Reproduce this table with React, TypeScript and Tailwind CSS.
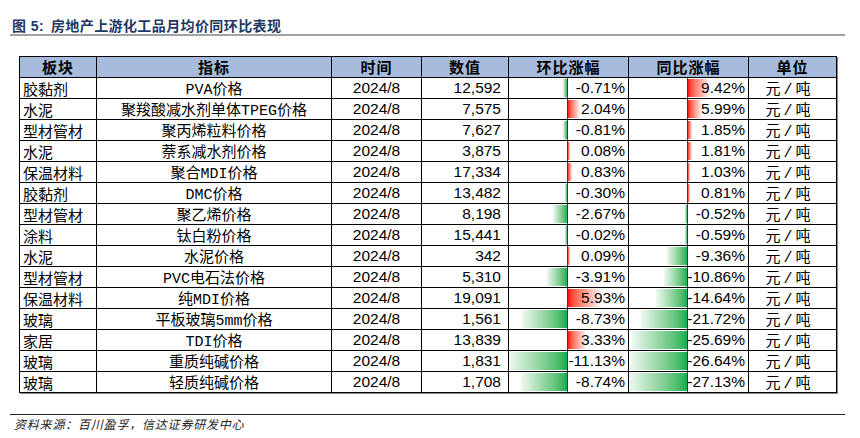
import React from "react";

type Row = {
  sector: string;
  item: string;
  value: string;
  mom: number;
  yoy: number;
};

const rows: Row[] = [
  { sector: "胶黏剂", item: "PVA价格", value: "12,592", mom: -0.71, yoy: 9.42 },
  { sector: "水泥", item: "聚羧酸减水剂单体TPEG价格", value: "7,575", mom: 2.04, yoy: 5.99 },
  { sector: "型材管材", item: "聚丙烯粒料价格", value: "7,627", mom: -0.81, yoy: 1.85 },
  { sector: "水泥", item: "萘系减水剂价格", value: "3,875", mom: 0.08, yoy: 1.81 },
  { sector: "保温材料", item: "聚合MDI价格", value: "17,334", mom: 0.83, yoy: 1.03 },
  { sector: "胶黏剂", item: "DMC价格", value: "13,482", mom: -0.3, yoy: 0.81 },
  { sector: "型材管材", item: "聚乙烯价格", value: "8,198", mom: -2.67, yoy: -0.52 },
  { sector: "涂料", item: "钛白粉价格", value: "15,441", mom: -0.02, yoy: -0.59 },
  { sector: "水泥", item: "水泥价格", value: "342", mom: 0.09, yoy: -9.36 },
  { sector: "型材管材", item: "PVC电石法价格", value: "5,310", mom: -3.91, yoy: -10.86 },
  { sector: "保温材料", item: "纯MDI价格", value: "19,091", mom: 5.93, yoy: -14.64 },
  { sector: "玻璃", item: "平板玻璃5mm价格", value: "1,561", mom: -8.73, yoy: -21.72 },
  { sector: "家居", item: "TDI价格", value: "13,839", mom: 3.33, yoy: -25.69 },
  { sector: "玻璃", item: "重质纯碱价格", value: "1,831", mom: -11.13, yoy: -26.64 },
  { sector: "玻璃", item: "轻质纯碱价格", value: "1,708", mom: -8.74, yoy: -27.13 },
];

const HALF = 58;

function DataBar({ v, max }: { v: number; max: number }) {
  const w = Math.max(2, Math.round((Math.abs(v) / max) * HALF));
  return (
    <div className="relative h-[20px] w-full">
      {v < 0 ? (
        <div
          className="absolute top-[1px] bottom-[1px] bg-linear-to-l from-[#00b050] to-[#eef9f2]"
          style={{ left: HALF - w, width: w }}
        />
      ) : (
        <div
          className="absolute top-[1px] bottom-[1px] bg-linear-to-r from-[#ff0000] to-[#ffe8e8]"
          style={{ left: HALF + 1, width: w }}
        />
      )}
      <div className="absolute top-0 bottom-0 left-[58px] w-px bg-[#3a3a3a]" />
      <div className="relative pr-[3px] text-right leading-[20px]">{v.toFixed(2)}%</div>
    </div>
  );
}

export default function App() {
  const cell = "border border-black p-0 h-[21px]";
  const head = "border border-black p-0 h-[21px] text-center font-bold tracking-[1px] text-[15px] leading-[20px]";
  const cjk = "[font-family:'Noto_Sans_CJK_SC',sans-serif]";
  const mono = "[font-family:'Liberation_Mono','Noto_Sans_CJK_SC',monospace]";
  const num = "[font-family:'Liberation_Sans',Arial,sans-serif] text-[15.5px]";

  return (
    <div className="w-[860px] h-[438px] bg-white overflow-hidden text-black">
      <div className="h-[34px] pt-[19px] pl-[12px] leading-[15px] text-[14px] font-bold text-[#1f3864] tracking-[0.4px] [font-family:'Liberation_Sans','Noto_Sans_CJK_SC',sans-serif]">
        <span className="mr-[7px]">图 5:</span>
        房地产上游化工品月均价同环比表现
      </div>
      <div className="ml-[10px] w-[835px] h-[2px] bg-[#a3a3a3]" />

      <table className={`mt-[20px] ml-[19px] w-[817px] table-fixed border-collapse shadow-[1px_1px_0_#8a8a8a] ${cjk}`}>
        <colgroup>
          <col className="w-[77px]" />
          <col className="w-[235px]" />
          <col className="w-[90px]" />
          <col className="w-[87px]" />
          <col className="w-[120px]" />
          <col className="w-[120px]" />
          <col className="w-[88px]" />
        </colgroup>
        <thead>
          <tr className="bg-[#a7bcdc]">
            <th className={head}>板块</th>
            <th className={head}>指标</th>
            <th className={head}>时间</th>
            <th className={head}>数值</th>
            <th className={head}>环比涨幅</th>
            <th className={head}>同比涨幅</th>
            <th className={head}>单位</th>
          </tr>
        </thead>
        <tbody>
          {rows.map((r, i) => (
            <tr key={i}>
              <td className={`${cell} pl-[3px] pt-[1px] text-[15px] leading-[19px] ${cjk}`}>{r.sector}</td>
              <td className={`${cell} pt-[5px] text-center text-[15px] leading-[15px] ${mono}`}>{r.item}</td>
              <td className={`${cell} text-center leading-[20px] ${num}`}>2024/8</td>
              <td className={`${cell} pr-[7px] text-right leading-[20px] ${num}`}>{r.value}</td>
              <td className={`${cell} ${num}`}>
                <DataBar v={r.mom} max={11.13} />
              </td>
              <td className={`${cell} ${num}`}>
                <DataBar v={r.yoy} max={27.13} />
              </td>
              <td className={`${cell} pt-[5px] pr-[6px] text-center text-[15px] leading-[15px] tracking-[3px] ${mono}`}>元/吨</td>
            </tr>
          ))}
        </tbody>
      </table>

      <div className="mt-[21px] ml-[10px] w-[835px] h-px bg-[#222]" />
      <div className="pl-[14px] pt-[1px] leading-[16px] text-[12px] italic tracking-[0.8px] text-[#222] [font-family:'Noto_Sans_CJK_SC',sans-serif]">
        资料来源：百川盈孚，信达证券研发中心
      </div>
    </div>
  );
}
